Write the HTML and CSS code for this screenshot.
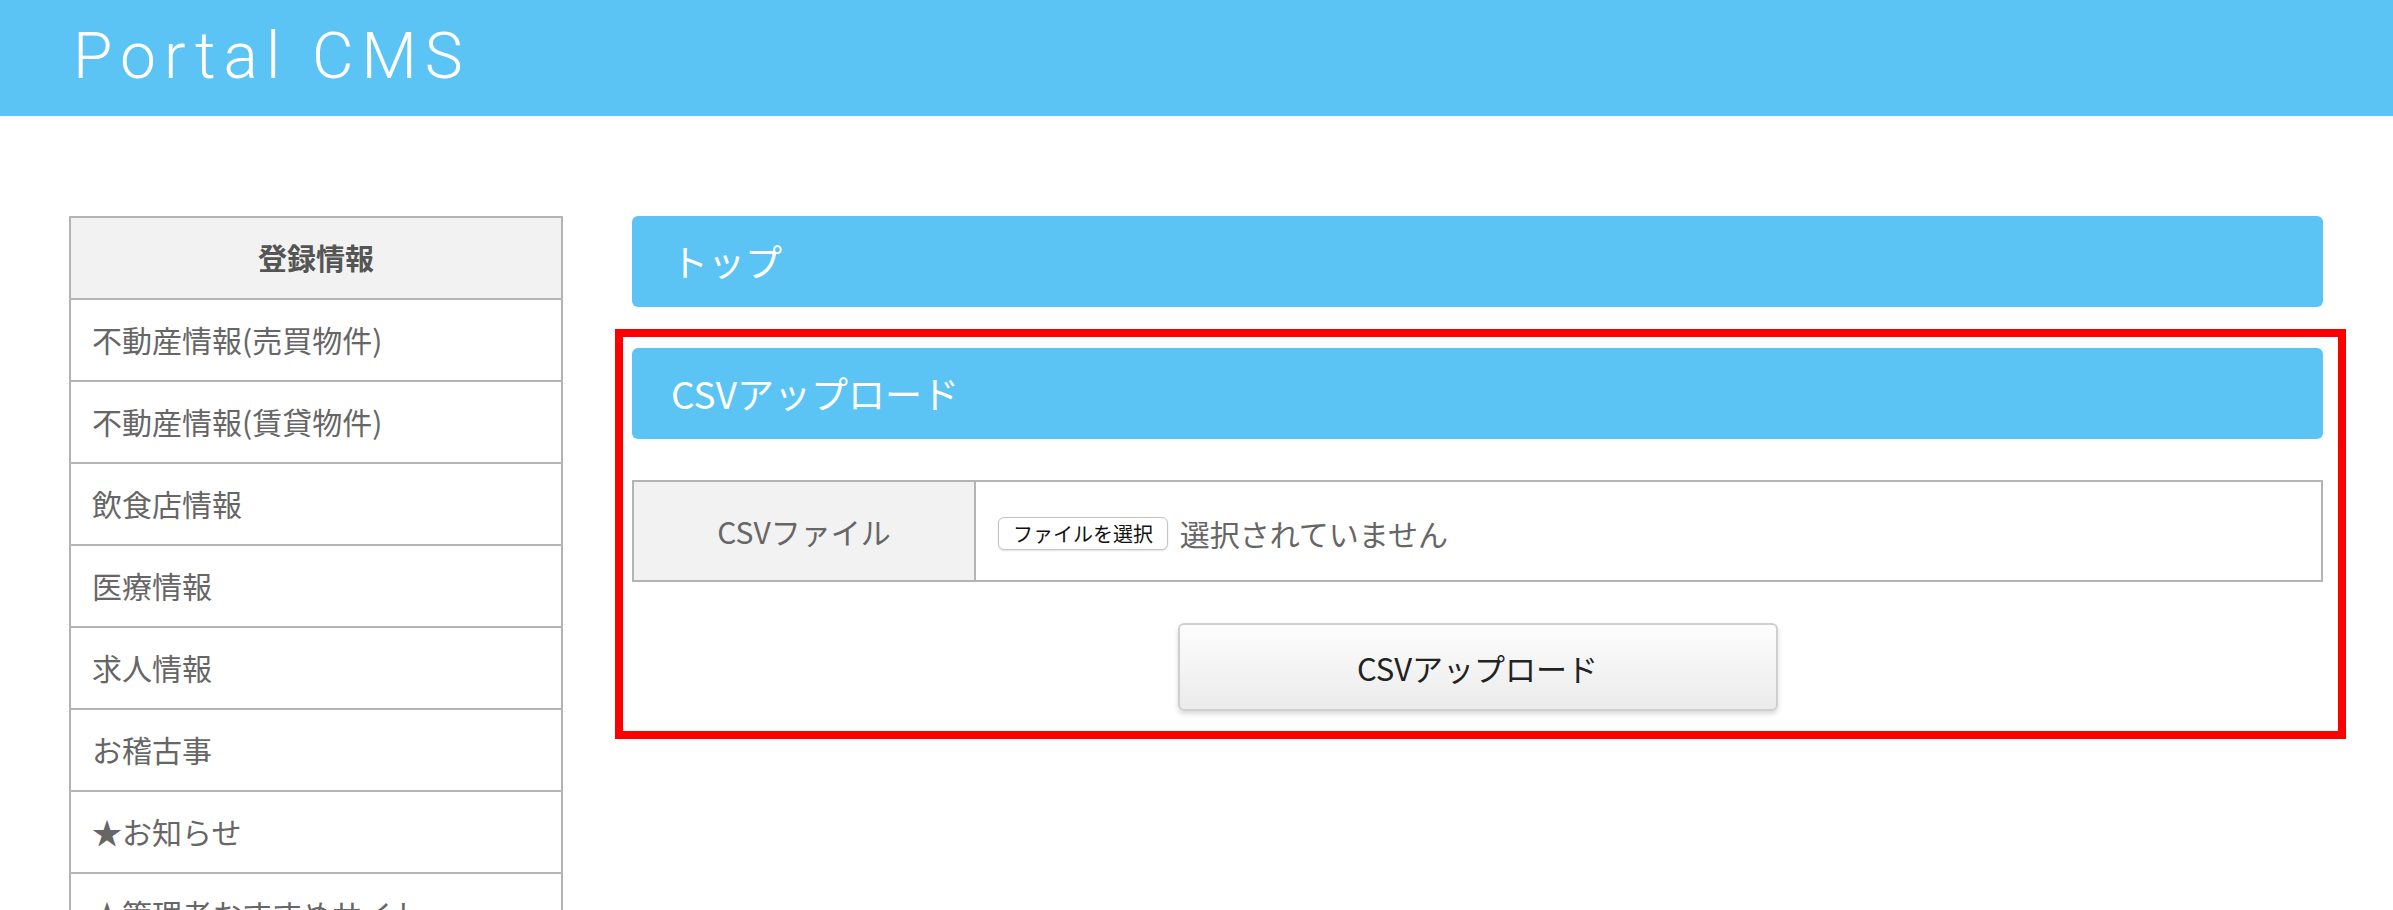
FILE: index.html
```html
<!DOCTYPE html>
<html lang="ja">
<head>
    <meta charset="UTF-8">
    <meta name="viewport" content="width=device-width, initial-scale=1.0">
    <title>Portal CMS</title>
    <link rel="stylesheet" href="styles.css">
</head>
<body>
    <header class="site-header">
        <h1>Portal CMS</h1>
    </header>
    <div class="wrapper">
        <nav class="side-menu">
            <ul>
                <li class="menu-title">登録情報</li>
                <li><a href="#">不動産情報(売買物件)</a></li>
                <li><a href="#">不動産情報(賃貸物件)</a></li>
                <li><a href="#">飲食店情報</a></li>
                <li><a href="#">医療情報</a></li>
                <li><a href="#">求人情報</a></li>
                <li><a href="#">お稽古事</a></li>
                <li><a href="#">★お知らせ</a></li>
                <li><a href="#">★管理者おすすめサイト</a></li>
            </ul>
        </nav>
        <main class="content">
            <h2 class="page-title">トップ</h2>
            <section class="csv-upload">
                <h2 class="page-title">CSVアップロード</h2>
                <form action="#" method="post" enctype="multipart/form-data">
                    <table class="form-table">
                        <tr>
                            <th>CSVファイル</th>
                            <td>
                                <label class="file-btn">
                                    ファイルを選択
                                    <input type="file" name="csv" accept=".csv">
                                </label>
                                <span class="file-name">選択されていません</span>
                            </td>
                        </tr>
                    </table>
                    <button type="submit" class="submit-btn">CSVアップロード</button>
                </form>
            </section>
        </main>
    </div>
</body>
</html>
```

FILE: styles.css
```css
body {
    font-family: "Noto Sans CJK JP", "Noto Sans", sans-serif;
    margin: 0;
    padding: 0;
    background-color: #fff;
    color: #666;
}

.site-header {
    background-color: #5bc4f4;
    height: 116px;
    padding: 0 0 0 73px;
}

    .site-header h1 {
        margin: 0;
        font-family: Roboto, "Liberation Sans", sans-serif;
        font-weight: 300;
        font-size: 64px;
        line-height: 114px;
        letter-spacing: 8px;
        color: #fff;
    }

.wrapper {
    display: flex;
    gap: 69px;
    padding: 100px 70px 0 69px;
}

.side-menu {
    width: 494px;
    flex-shrink: 0;
}

    .side-menu ul {
        list-style: none;
        margin: 0;
        padding: 0;
        border: 2px solid #b4b4b4;
        border-bottom: none;
    }

    .side-menu li {
        height: 80px;
        line-height: 78px;
        border-bottom: 2px solid #b4b4b4;
        font-size: 30px;
        white-space: nowrap;
        overflow: hidden;
    }

        .side-menu li a {
            display: block;
            padding-left: 21px;
            color: #666;
            text-decoration: none;
        }

    .side-menu .menu-title {
        background-color: #f2f2f2;
        text-align: center;
        font-weight: bold;
        font-size: 29px;
        color: #555;
    }

.content {
    flex: 1;
    min-width: 0;
}

.page-title {
    margin: 0 0 41px;
    height: 91px;
    line-height: 91px;
    padding-left: 39px;
    background-color: #5bc4f4;
    border-radius: 6px;
    color: #fff;
    font-size: 37px;
    font-weight: normal;
}

.csv-upload {
    position: relative;
}

    /* red frame around the upload block */
    .csv-upload::after {
        content: "";
        position: absolute;
        top: -19px;
        left: -17px;
        right: -23px;
        bottom: -28px;
        border: 8px solid #ff0000;
        pointer-events: none;
    }

.form-table {
    width: 100%;
    border-collapse: collapse;
    border: 2px solid #b4b4b4;
}

    .form-table th {
        width: 340px;
        height: 98px;
        padding: 0;
        background-color: #f2f2f2;
        border-right: 2px solid #b4b4b4;
        font-size: 30px;
        font-weight: normal;
        color: #666;
    }

    .form-table td {
        padding: 0 0 0 22px;
        font-size: 30px;
    }

.file-btn {
    display: inline-block;
    vertical-align: middle;
    height: 31px;
    line-height: 31px;
    padding: 0 14px;
    border: 1px solid #c4c4c4;
    border-radius: 6px;
    background-color: #fff;
    box-shadow: 0 1px 2px rgba(0, 0, 0, 0.12);
    font-size: 20px;
    color: #111;
}

    .file-btn input {
        display: none;
    }

.file-name {
    vertical-align: middle;
    margin-left: 5px;
    color: #666;
}

.submit-btn {
    display: block;
    width: 600px;
    height: 88px;
    margin: 41px auto 0;
    border: 2px solid #cfcfcf;
    border-radius: 6px;
    background: linear-gradient(#fdfdfd, #ebebeb);
    box-shadow: 0 3px 5px rgba(0, 0, 0, 0.15);
    font-family: "Noto Sans CJK JP", sans-serif;
    font-size: 31px;
    color: #222;
}
```
